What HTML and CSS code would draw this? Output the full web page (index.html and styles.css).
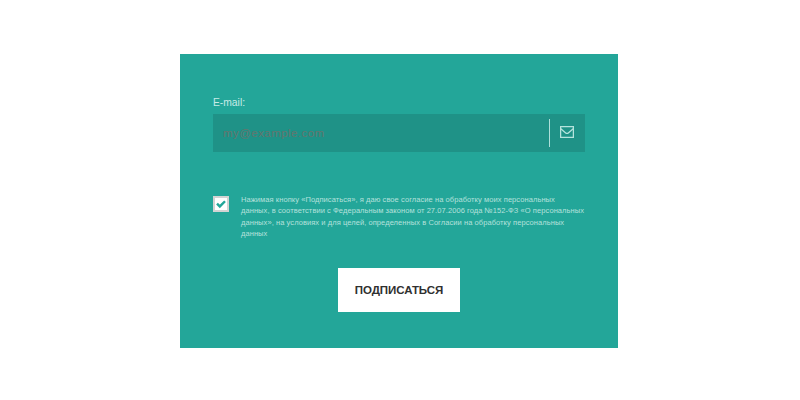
FILE: index.html
```html
<!DOCTYPE html>
<html lang="ru">
<head>
<meta charset="utf-8">
<title>Подписка</title>
<link rel="stylesheet" href="styles.css">
</head>
<body>
<form class="card">
  <label class="label" for="email">E-mail:</label>
  <div class="field">
    <input class="input" id="email" type="email" placeholder="my@example.com">
    <span class="icon">
      <svg width="14" height="12" viewBox="0 0 14 12" fill="none" stroke="currentColor" stroke-width="1.300"><path d="M.6.6H13.400V11.400H.6Z"/><path d="M.8 2.800 5.700 6.900Q7 8 8.300 6.900L13.200 2.800"/></svg>
    </span>
  </div>
  <div class="consent">
    <span class="check"><svg width="10" height="10" viewBox="0 0 12 12" fill="none" stroke="currentColor" stroke-width="2.900"><path d="M1.200 5.500 4.600 8.900 10.800 2.700"/></svg></span>
    <p class="terms">Нажимая кнопку «Подписаться», я даю свое согласие на обработку моих персональных<br>данных, в соответствии с Федеральным законом от 27.07.2006 года №152-ФЗ «О персональных<br>данных», на условиях и для целей, определенных в Согласии на обработку персональных<br>данных</p>
  </div>
  <button class="submit" type="button">ПОДПИСАТЬСЯ</button>
</form>
</body>
</html>
```
FILE: styles.css
```css
* { box-sizing: border-box; }
body { display: flow-root; margin: 0; height: 400px; background: #fff; font-family: "Liberation Sans", Arial, sans-serif; }
.card { display: flex; flex-direction: column; width: 438px; height: 294px; margin: 54px 0 0 180px; padding: 42px 33px 0; background: #23a699; }
.label { font-size: 10.3px; line-height: 13px; color: #c8ebe7; }
.field { display: flex; align-items: center; height: 38px; margin-top: 5px; background: #1f9287; }
.input { flex: 1; min-width: 0; height: 38px; padding: 0 10px 1px; border: 0; background: transparent; font: 11.5px "Liberation Sans", Arial, sans-serif; letter-spacing: .44px; outline: 0; }
.input::placeholder { color: #65756e; opacity: 1; }
.icon { display: flex; align-items: center; justify-content: center; width: 36px; height: 28px; padding-right: 2px; padding-bottom: 2px; border-left: 1px solid #aedfda; color: #b5e3dd; }
.consent { display: flex; gap: 12px; margin-top: 42px; }
.check { display: flex; align-items: center; justify-content: center; width: 16px; height: 16px; margin-top: 2px; border: 2px solid #d3d3d3; background: #fff; color: #23a699; }
.terms { margin: 0; font-size: 7.5px; line-height: 11.3px; letter-spacing: .072px; white-space: nowrap; color: #b5e1dc; }
.submit { align-self: center; width: 122px; height: 44px; margin-top: 29px; padding: 0; border: 0; background: #fff; color: #303030; font: bold 11.5px "Liberation Sans", Arial, sans-serif; letter-spacing: -.06px; }
```
